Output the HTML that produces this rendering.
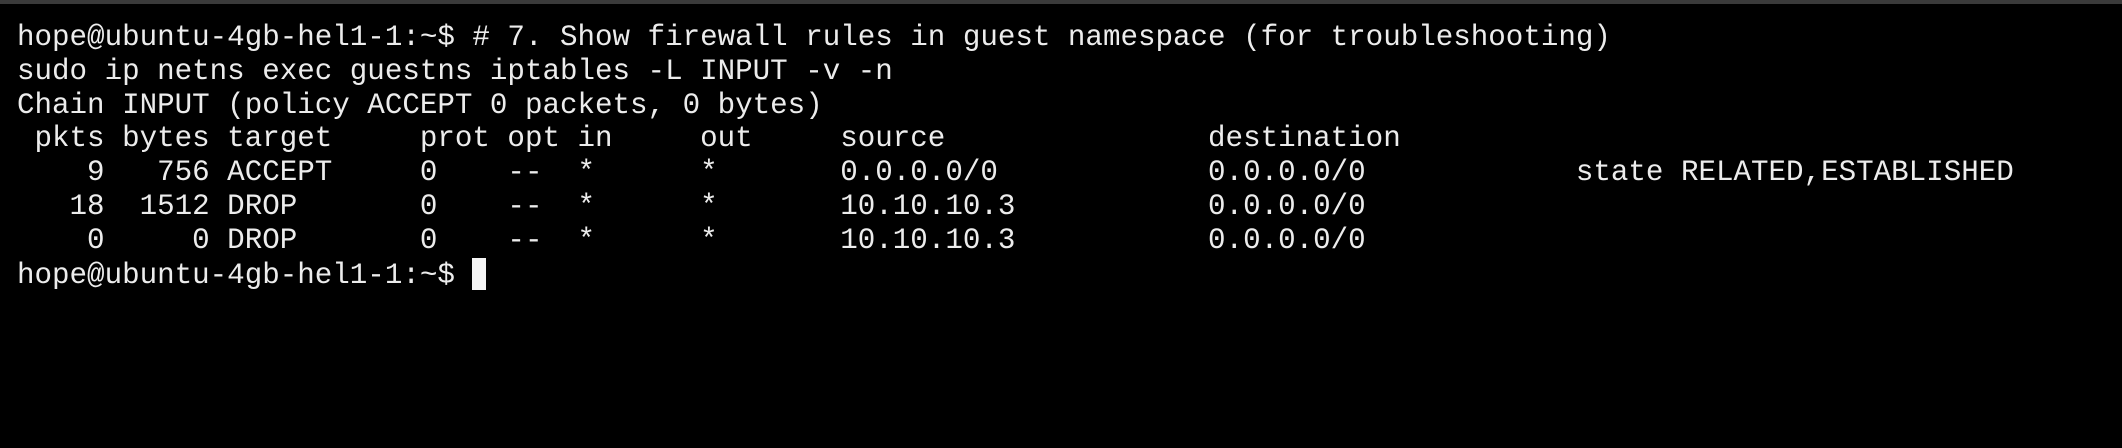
<!DOCTYPE html>
<html><head><meta charset="utf-8"><style>
html,body{margin:0;padding:0;background:#000;}
body{width:2122px;height:448px;overflow:hidden;position:relative;border-top:4px solid #3a3a3a;box-sizing:border-box;}
pre{margin:0;position:absolute;left:17px;top:17px;font-family:"Liberation Mono",monospace;font-size:29.2px;line-height:33.8px;color:#ececec;}
.cur{display:inline-block;width:14px;height:32px;background:#f5f5f5;vertical-align:-7px;}
</style></head><body>
<pre>hope@ubuntu-4gb-hel1-1:~$ # 7. Show firewall rules in guest namespace (for troubleshooting)
sudo ip netns exec guestns iptables -L INPUT -v -n
Chain INPUT (policy ACCEPT 0 packets, 0 bytes)
 pkts bytes target     prot opt in     out     source               destination
    9   756 ACCEPT     0    --  *      *       0.0.0.0/0            0.0.0.0/0            state RELATED,ESTABLISHED
   18  1512 DROP       0    --  *      *       10.10.10.3           0.0.0.0/0
    0     0 DROP       0    --  *      *       10.10.10.3           0.0.0.0/0
hope@ubuntu-4gb-hel1-1:~$ <span class="cur"></span></pre>
</body></html>
